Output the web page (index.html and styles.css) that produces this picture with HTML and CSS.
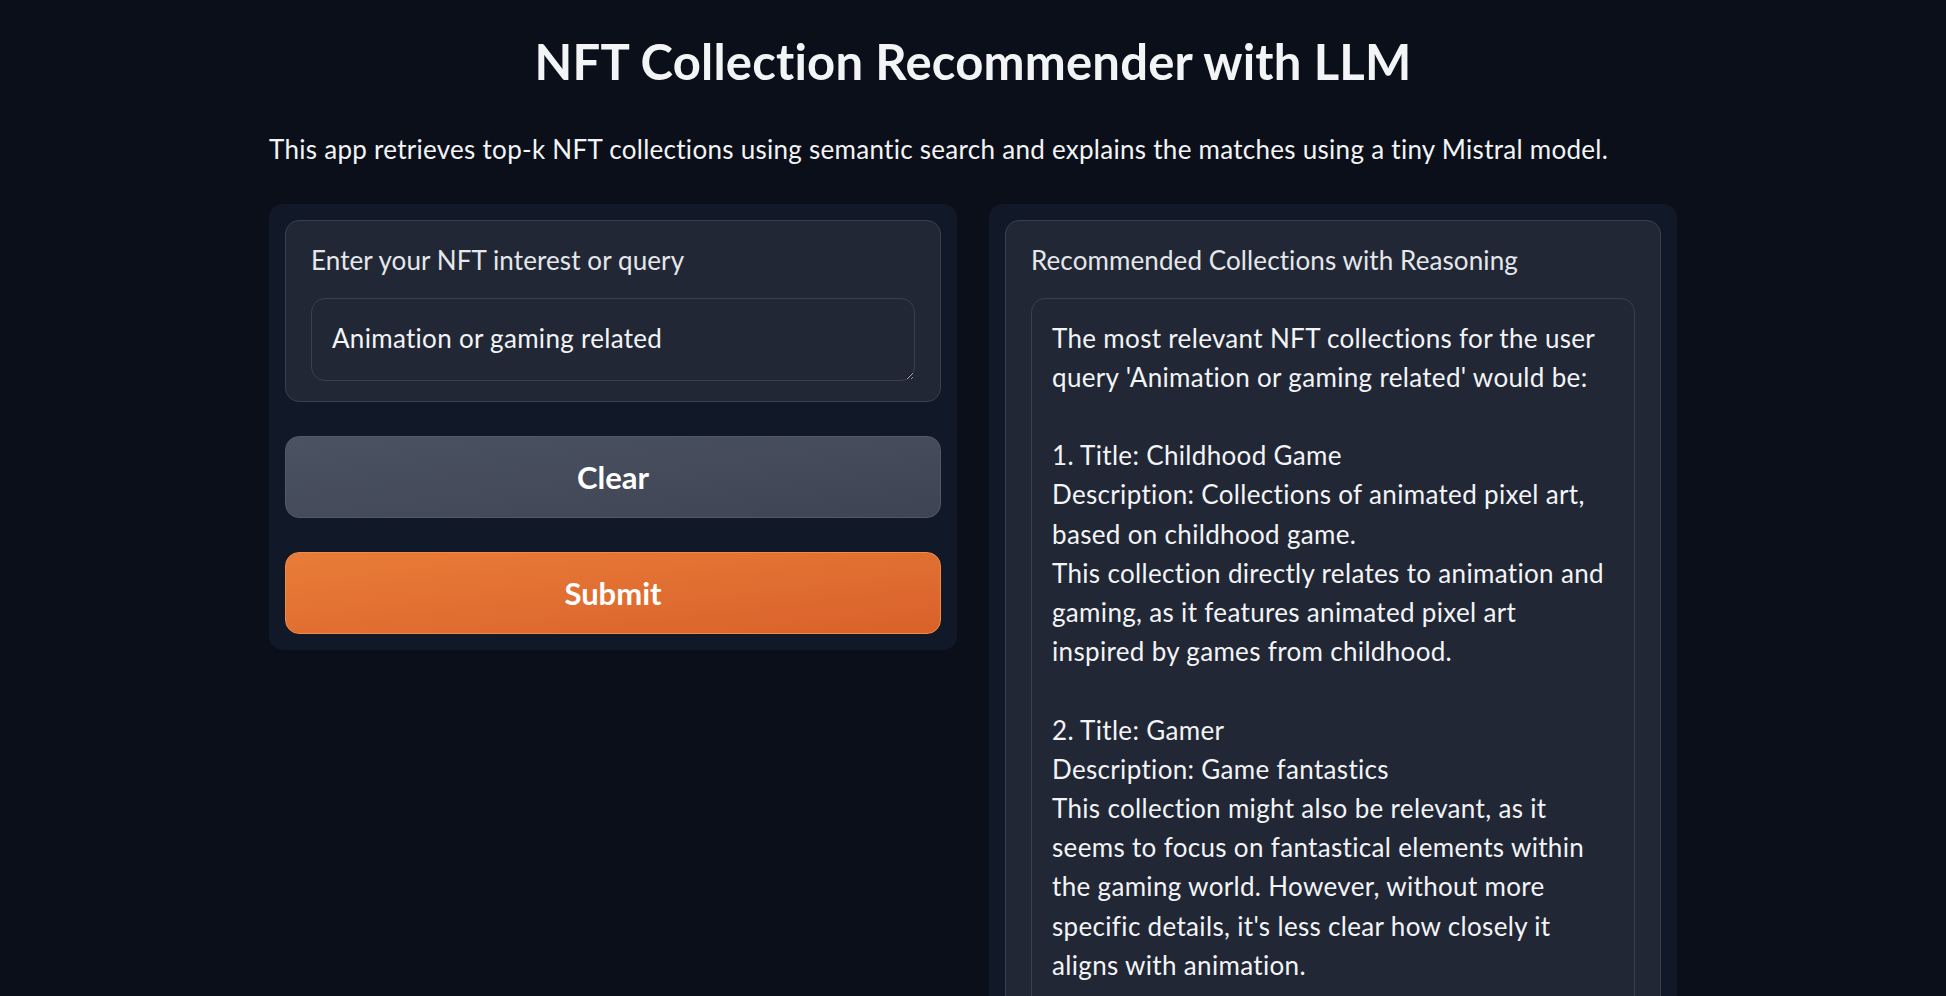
FILE: index.html
```html
<!DOCTYPE html>
<html lang="en">
<head>
<meta charset="utf-8">
<title>NFT Collection Recommender with LLM</title>
<link rel="stylesheet" href="styles.css">
</head>
<body>
<main class="app">
  <h1 class="title">NFT Collection Recommender with LLM</h1>
  <p class="intro">This app retrieves top-k NFT collections using semantic search and explains the matches using a tiny Mistral model.</p>
  <div class="row">
    <section class="panel panel-left">
      <div class="block">
        <label class="label" for="query">Enter your NFT interest or query</label>
        <textarea id="query" class="input" rows="1">Animation or gaming related</textarea>
      </div>
      <button class="btn btn-secondary" type="button">Clear</button>
      <button class="btn btn-primary" type="button">Submit</button>
    </section>
    <section class="panel panel-right">
      <div class="block">
        <div class="label">Recommended Collections with Reasoning</div>
        <div class="output">The most relevant NFT collections for the user
query 'Animation or gaming related' would be:

1. Title: Childhood Game
Description: Collections of animated pixel art,
based on childhood game.
This collection directly relates to animation and
gaming, as it features animated pixel art
inspired by games from childhood.

2. Title: Gamer
Description: Game fantastics
This collection might also be relevant, as it
seems to focus on fantastical elements within
the gaming world. However, without more
specific details, it's less clear how closely it
aligns with animation.</div>
      </div>
    </section>
  </div>
</main>
</body>
</html>
```
FILE: styles.css
```css
* {
  box-sizing: border-box;
}

html, body {
  margin: 0;
  padding: 0;
  background: #0b0f19;
  height: 100%;
  overflow: hidden;
}

body {
  font-family: "Lato", "Noto Sans", sans-serif;
  color: #f3f4f6;
}

.app {
  width: 1408px;
  margin: 0 auto;
  padding-top: 32px;
}

.title {
  margin: 0;
  font-size: 49px;
  line-height: 58px;
  font-weight: 700;
  letter-spacing: 0.2px;
  text-align: center;
  color: #f3f4f6;
}

.intro {
  margin: 41px 0 0;
  font-size: 26px;
  line-height: 36.4px;
  letter-spacing: 0.28px;
  color: #f3f4f6;
}

.row {
  display: flex;
  gap: 32px;
  align-items: flex-start;
  margin-top: 37px;
}

.panel {
  flex: 1 1 0;
  background: #111827;
  border-radius: 14px;
  padding: 16px;
  display: flex;
  flex-direction: column;
  gap: 34px;
}

.block {
  background: #212735;
  border: 1px solid #3a404e;
  border-radius: 14px;
  padding: 20px 25px;
  display: flex;
  flex-direction: column;
}

.label {
  display: block;
  font-size: 26px;
  line-height: 39.2px;
  letter-spacing: 0.1px;
  color: #e5e7eb;
  margin-bottom: 17px;
}

.input {
  display: block;
  width: 100%;
  height: 83px;
  padding: 20px 20px 22px;
  font-family: inherit;
  font-size: 26px;
  line-height: 39.2px;
  letter-spacing: 0.3px;
  color: #f3f4f6;
  background: #212735;
  border: 1px solid #3a404e;
  border-radius: 14px;
  outline: none;
  color-scheme: dark;
  overflow: hidden;
}

.btn {
  height: 82px;
  width: 100%;
  border-radius: 14px;
  font-family: inherit;
  font-size: 31px;
  font-weight: 700;
  color: #ffffff;
  cursor: pointer;
}

.btn-secondary {
  background: linear-gradient(to bottom right, #4b5261, #3e4453);
  border: 1px solid #525969;
}

.btn-primary {
  background: linear-gradient(to bottom right, #e97c38, #d9612b);
  border: 1px solid #f08a44;
}

.output {
  padding: 20px 20px;
  border: 1px solid #3a404e;
  border-radius: 14px;
  font-size: 26px;
  line-height: 39.2px;
  letter-spacing: 0.33px;
  color: #f3f4f6;
  white-space: pre;
  min-height: 720px;
}
```
